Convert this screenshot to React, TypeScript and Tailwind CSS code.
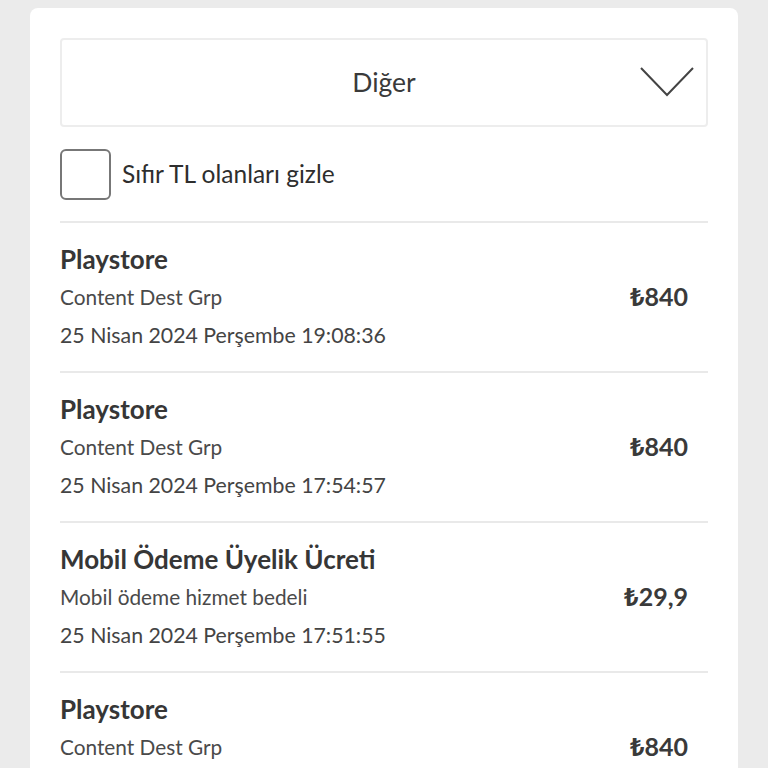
const rows = [
  { title: "Playstore", sub: "Content Dest Grp", date: "25 Nisan 2024 Perşembe 19:08:36", amount: "840" },
  { title: "Playstore", sub: "Content Dest Grp", date: "25 Nisan 2024 Perşembe 17:54:57", amount: "840" },
  { title: "Mobil Ödeme Üyelik Ücreti", sub: "Mobil ödeme hizmet bedeli", date: "25 Nisan 2024 Perşembe 17:51:55", amount: "29,9" },
  { title: "Playstore", sub: "Content Dest Grp", date: "25 Nisan 2024 Perşembe 17:50:12", amount: "840" },
];

function Chevron() {
  return (
    <svg width="54" height="30" viewBox="0 0 54 30" fill="none">
      <path d="M1 1 L27 28 L53 1" stroke="#444" strokeWidth="2" />
    </svg>
  );
}

export default function App() {
  return (
    <div
      className="min-h-screen bg-[#ebebeb] px-[30px] pt-2"
      style={{ fontFamily: "Lato, 'Noto Sans', 'DejaVu Sans', sans-serif" }}
    >
      <div className="h-[760px] overflow-hidden rounded-t-lg bg-white px-[30px] pt-[30px]">
        {/* select */}
        <div className="relative flex h-[89px] items-center justify-center rounded border-2 border-[#ededed] text-[26.5px] text-[#3a3a3a]">
          Diğer
          <div className="absolute right-[12px] top-[27px]">
            <Chevron />
          </div>
        </div>

        {/* checkbox */}
        <label className="mt-[22px] flex items-center gap-[11px] text-[24.5px] text-[#2e2e2e]">
          <span className="h-[51px] w-[51px] rounded-md border-2 border-[#777]" />
          Sıfır TL olanları gizle
        </label>

        <div className="mt-[21px]">
          {rows.map((r, i) => (
            <div
              key={i}
              className="flex items-center justify-between border-t-2 border-[#e9e9e9] pb-[17px] pr-5 pt-[17px]"
            >
              <div>
                <div className="text-[26px] font-bold leading-[38px] text-[#363636]">{r.title}</div>
                <div className="text-[20.8px] leading-[38px] text-[#4a4a4a]">{r.sub}</div>
                <div className="text-[21.3px] leading-[38px] text-[#444]">{r.date}</div>
              </div>
              <div className="text-[25px] font-bold text-[#3a3a3a]">
                <span style={{ fontFamily: "'Noto Sans', 'DejaVu Sans', sans-serif" }}>₺</span>
                {r.amount}
              </div>
            </div>
          ))}
        </div>
      </div>
    </div>
  );
}
